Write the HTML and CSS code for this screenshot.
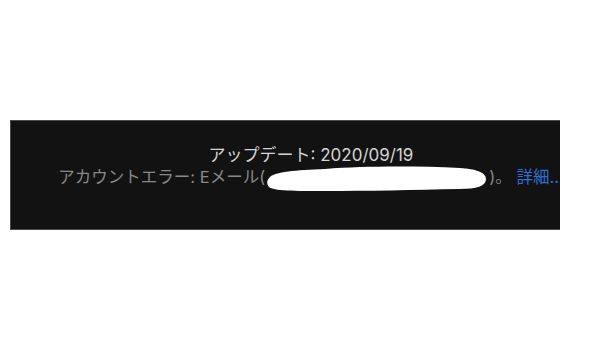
FILE: index.html
```html
<!DOCTYPE html>
<html lang="ja">
<head>
  <meta charset="UTF-8" />
  <meta name="viewport" content="width=device-width, initial-scale=1" />
  <title>アップデート</title>
  <link rel="stylesheet" href="styles.css">
</head>
<body>
  <div class="panel">
    <div class="status">
      <p class="updated">アップデート: 2020/09/19</p>
      <p class="error">アカウントエラー: Eメール(<span class="redact"><svg viewBox="0 0 224 28" width="224" height="28"><path d="M5 13 C10 8 30 6 60 5 C100 2 150 2 195 4 C210 5 221 8 221 15 C221 22 212 25 194 25 C150 26 100 27 60 27 C30 27 8 27 4 23 C1 19 2 16 5 13 Z" fill="#fff"/></svg></span>)。 <a class="more">詳細...</a></p>
    </div>
  </div>
</body>
</html>
```

FILE: styles.css
```css
body {
  margin: 0;
  background: #fff;
  font-family: "Inter", "Noto Sans CJK JP", sans-serif;
}
.panel {
  margin: 120px 0 0 10px;
  width: 549px;
  height: 108px;
  background: #121212;
  border: 1px solid #4a4a4a;
  border-right: none;
  overflow: hidden;
}
.status {
  width: 600px;
  padding-top: 23px;
  text-align: center;
  white-space: nowrap;
}
.status p {
  margin: 0;
  line-height: 22px;
}
.updated {
  font-size: 17px;
  color: #d4d4d4;
}
.error {
  font-size: 16.5px;
  color: #888;
}
.redact {
  display: inline-block;
  position: relative;
  width: 224px;
  height: 1em;
  vertical-align: middle;
}
.redact svg {
  position: absolute;
  left: 0;
  top: -6px;
}
.more {
  color: #2f6fd4;
}
```
